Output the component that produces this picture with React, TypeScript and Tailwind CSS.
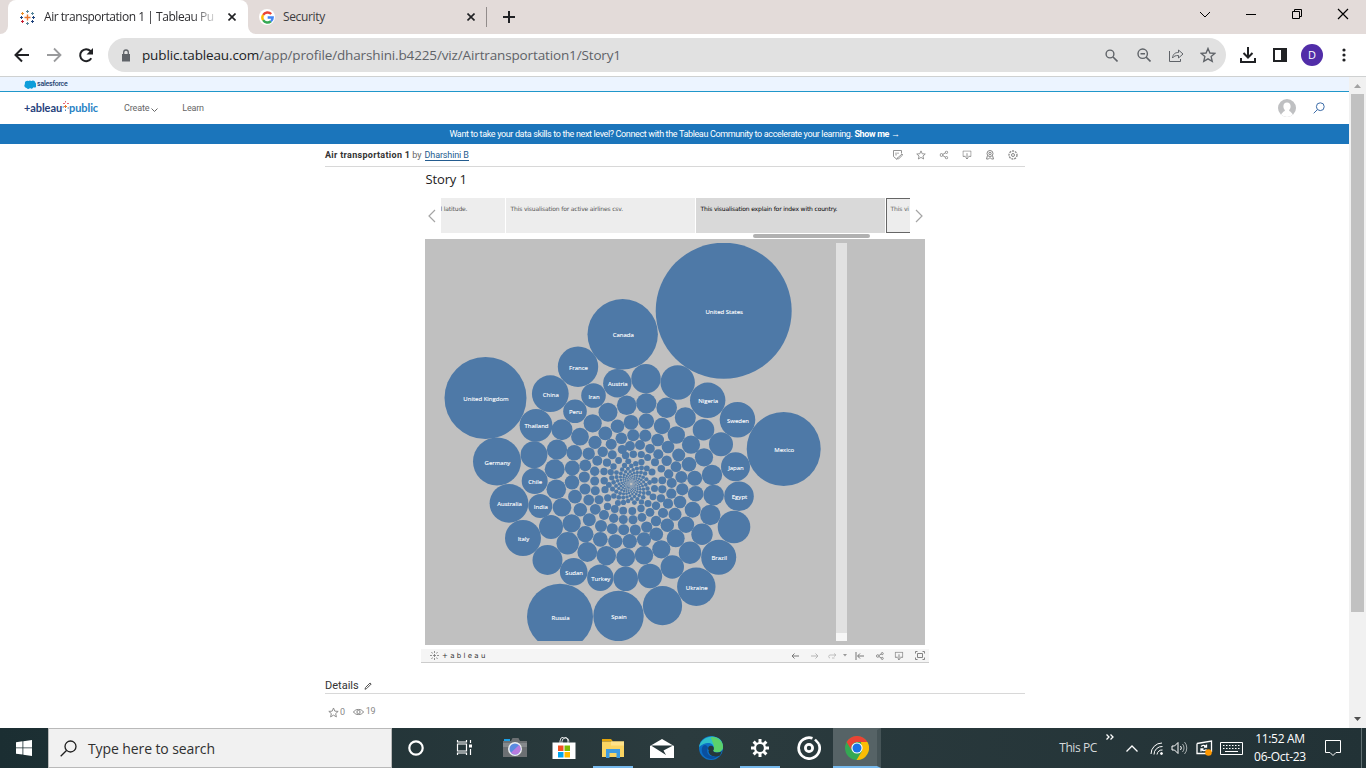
import React from "react";

type Circle = [number, number, number, string?];

const bubbles: Circle[] = [
  [723.7, 310.7, 68, "United States"], [622.7, 334.3, 35.2, "Canada"], [485.5, 398, 41, "United Kingdom"],
  [783.7, 449, 37, "Mexico"], [578, 366.7, 20.2, "France"], [550.3, 393.7, 18.4, "China"], [536, 425.3, 16.4, "Thailand"],
  [575, 411.3, 11.8, "Peru"], [593.5, 395.5, 12.3, "Iran"], [617.3, 383.3, 14.2, "Austria"], [707.7, 400.3, 17.7, "Nigeria"],
  [737.5, 419.7, 17.8, "Sweden"], [497, 461.5, 24, "Germany"], [509, 503.3, 19.4, "Australia"], [523, 538, 18, "Italy"],
  [573.7, 571.7, 13.8, "Sudan"], [600.3, 577.7, 13.2, "Turkey"], [560, 616.7, 33, "Russia"], [618.5, 616, 25.2, "Spain"],
  [534.7, 481, 13, "Chile"], [540.3, 506, 12, "India"], [735.5, 466.7, 14.5, "Japan"], [739, 496.3, 14.8, "Egypt"],
  [718.7, 557.3, 17.5, "Brazil"], [696.3, 586.7, 19.2, "Ukraine"],
  [662.5, 605.7, 19.6], [734, 527, 16.3], [547.5, 560, 15], [646, 378.7, 14.7], [677.7, 382.5, 17.2],
  [608, 412.3, 9.5], [626.7, 405.3, 9.8], [592.7, 423.3, 9.1], [562, 429.7, 10.5], [580, 436.7, 8.9], [605.3, 433.3, 6.9],
  [617.5, 426.3, 6.8], [631, 422.3, 7.4], [595, 442.3, 6.6], [611.2, 444.2, 5.5], [621.3, 438.3, 5.8], [633.2, 435.3, 6],
  [646.3, 403.3, 10.1], [666.7, 407.7, 10.3], [685.3, 417.7, 10.5], [703.5, 429.7, 10.8], [721, 444.3, 12],
  [646.3, 421.3, 7.8], [662, 426, 8.2], [676.3, 435, 8.7], [691, 444.7, 9.1], [645.3, 435.7, 6.1], [657.7, 440, 6.3],
  [668, 447, 6.3], [640, 445, 5], [650, 448.7, 4.8], [630, 446, 4.9], [622.3, 449.5, 4.6],
  [534, 454.7, 13.4], [557, 449.7, 10.1], [554.7, 469.3, 10], [556.3, 489.3, 9.8], [562, 507.3, 9.3], [551, 527, 12],
  [567.7, 543.3, 11.2], [587.3, 552, 9.9], [606.3, 555.7, 9.7], [625.7, 557.3, 9.4], [625.7, 578.7, 12.3],
  [574.3, 452.7, 7.8], [572.3, 468, 7.5], [572, 482.3, 7.2], [575, 496.7, 6.9], [580.3, 509.7, 6.8], [571.7, 523.3, 9.1],
  [585.3, 534.3, 8.2], [600.3, 539.3, 7.4], [615.3, 541.3, 7.1], [588.7, 453.7, 6.2], [585.3, 465.3, 5.9], [584.3, 477, 5.6],
  [585, 489, 5.5], [588.7, 500, 5.4], [595.3, 509.3, 5.4], [589.3, 519.7, 6.5], [601, 526, 6], [612.3, 528.7, 5.5],
  [623.7, 529.7, 5.5], [602.7, 451.7, 5.2], [597.3, 460.7, 5], [594.7, 471.2, 4.7], [594.7, 481, 4.5], [595.3, 490.7, 4.5],
  [599, 499.8, 4.5], [604, 515, 5], [613.7, 518.3, 4.7], [623.3, 519.5, 4.5], [612.3, 454.8, 4.5], [607, 462.7, 4.1],
  [650, 576, 12.2], [672.3, 567, 11.7], [690, 552.7, 11.2], [702, 534.3, 10.7], [710.3, 515, 10.2], [713.7, 495, 10.3],
  [712, 475, 10.2], [704, 457.3, 9.1], [689, 464.3, 7.3], [678.7, 455, 6.5], [694.7, 478.3, 7.5], [695.7, 493.7, 7.8],
  [692.7, 509.7, 8], [686, 524.7, 8.2], [675.7, 538.3, 9], [661.3, 549.3, 9.1], [644, 555.3, 9.2], [629.7, 541.3, 7.2],
  [644, 539.3, 7], [656.3, 534.3, 6.8], [667.3, 525.3, 6.7], [675, 514.3, 6.5], [680, 502, 6.3], [682.3, 489.3, 6.1],
  [681.3, 477, 6], [676, 466.7, 5.4], [666.7, 460.7, 5.2], [658.3, 454.3, 5], [668.7, 474, 4.7], [671.7, 483, 5],
  [671.3, 493.7, 5.1], [668, 503.7, 5.1], [663, 513, 5.1], [656, 521, 5.2], [646.7, 527, 5.6], [635.3, 530, 5.5],
  [633, 519.7, 4.5], [642, 517.3, 4.4], [650, 512.3, 4.4], [656, 505.7, 4.2], [661, 498.3, 4.1], [662.3, 489.3, 4.1],
  [662.3, 480.3, 3.9], [661.3, 468.7, 3.8], [655, 462.3, 4], [647.6, 457.5, 3.5],
  [604, 471.5, 3.7], [604.2, 480.7, 3.7], [605, 489.7, 3.6], [607.7, 497.8, 3.6], [607.5, 506.5, 3.7], [614.8, 509, 3.9],
  [623.2, 510.7, 3.9], [632.3, 511, 3.9], [641, 508.5, 3.7], [648, 503.5, 3.5], [653, 496.8, 3.4], [654.5, 488.5, 3.5],
  [654.5, 480.5, 3.3], [652, 472, 3.5], [625.6, 455.5, 3.7], [633.3, 454.3, 3.7], [641.3, 454.5, 3.6], [618.6, 460.5, 3.4], [613.5, 466.5, 3.2],
];

const core: Circle[] = [];
for (let k = 0; k < 270; k++) {
  const d = 27 * Math.exp(-0.0112 * k);
  const a = k * 2.399963;
  const x = 631.2 + Math.cos(a) * d;
  const y = 484 + Math.sin(a) * d;
  const r = d * 0.13;
  if (bubbles.every(([bx, by, br]) => Math.hypot(bx - x, by - y) > br + r - 1)) core.push([x, y, r]);
}

const I = ({ w, h = w, c = "", children, vb }: { w: number; h?: number; c?: string; vb?: string; children: React.ReactNode }) => (
  <svg width={w} height={h} viewBox={vb ?? `0 0 ${w} ${h}`} fill="none" stroke="currentColor" className={`block shrink-0 ${c}`}>
    {children}
  </svg>
);

const ShareIcon = ({ c = "" }: { c?: string }) => (
  <I w={10} c={c}>
    <circle cx="2.2" cy="5" r="1.6" /><circle cx="7.8" cy="2" r="1.3" /><circle cx="7.8" cy="8" r="1.3" />
    <path d="M3.7 4.3 6.6 2.6M3.7 5.7l2.9 1.7" />
  </I>
);
const DownloadIcon = ({ c = "" }: { c?: string }) => (
  <I w={10} c={c}><path d="M3.5 6.5h-3v-6h9v6h-3M5 3v6.3M3.4 7.8 5 9.4l1.6-1.6" /></I>
);
const Star = ({ w, c = "" }: { w: number; c?: string }) => (
  <I w={w} vb="0 0 20 20" c={c}><path strokeWidth="1.7" d="m10 1.8 2.4 5.7 6.1.5-4.6 4 1.4 6-5.3-3.2L4.700 18l1.400-6-4.600-4 6.100-.5z" /></I>
);

function Chrome() {
  return (
    <div className="font-['Open_Sans',sans-serif]">
      <div className="flex h-[34px] bg-[#e3dbd9]">
        <div className="h-full w-2 bg-white"><div className="h-full rounded-br-lg bg-[#e3dbd9]" /></div>
        <div className="flex h-full w-[240px] items-center rounded-t-lg bg-white pl-3">
          <I w={15}>
            <path stroke="#e8762c" strokeWidth="1.4" d="M7.500 4.500v6M4.500 7.500h6" />
            <path stroke="#59879b" d="M7.500 0v3M6 1.500h3M7.500 12v3M6 13.500h3M11 3.500h3M12.500 2v3" />
            <path stroke="#c72035" d="M1 11.500h3M2.500 10v3" /><path stroke="#eb912c" d="M1 3.500h3M2.500 2v3" />
            <path stroke="#1f447e" d="M11 11.500h3M12.500 10v3M13.500 6v3M12 7.500h3M0 7.500h3M1.500 6v3" />
          </I>
          <div className="ml-[9px] w-[176px] whitespace-nowrap text-[12px] tracking-[-0.46px] text-[#2c2c2f] [mask-image:linear-gradient(90deg,#000_84%,transparent)]">Air transportation 1 | Tableau Pu</div>
          <I w={8} c="ml-[8px] text-[#202124]"><path strokeWidth="1.600" d="m.5.5 7 7M7.500.5l-7 7" /></I>
        </div>
        <div className="h-full w-2 bg-white"><div className="h-full rounded-bl-lg bg-[#e3dbd9]" /></div>
        <div className="flex h-full items-center">
          <div className="ml-[3px] flex size-4 items-center justify-center rounded-full bg-white">
            <I w={13} vb="0 0 24 24">
              <g strokeWidth="4.500"><path stroke="#ea4335" d="M4 7a9.500 9.500 0 0 1 14.800-1.500" /><path stroke="#fbbc05" d="M4 7a9.500 9.500 0 0 0 0 10" /><path stroke="#34a853" d="M4 17a9.500 9.500 0 0 0 14.200 2" /><path stroke="#4285f4" d="M12.300 12h9.200c0 3-1.200 5.500-3.300 7" /></g>
            </I>
          </div>
          <div className="ml-2 w-[184px] text-[12px] tracking-[-0.35px] text-[#3c3c3f]">Security</div>
          <I w={8} c="text-[#202124]"><path strokeWidth="1.600" d="m.5.5 7 7M7.500.5l-7 7" /></I>
          <div className="ml-[11px] h-5 w-px bg-[#928c8b]" />
          <I w={12} c="ml-4 text-[#202124]"><path strokeWidth="2" d="M6 0v12M0 6h12" /></I>
        </div>
        <div className="ml-auto flex h-7 items-center gap-[34px] pr-[17px] text-black">
          <I w={12}><path d="m1 4 5 5 5-5" /></I>
          <I w={12}><path d="M1 6.500h10" /></I>
          <I w={12}><path d="M1.500 3.500h7v7h-7zM3.500 3.500v-2h7v7h-2" /></I>
          <I w={12}><path strokeWidth="1.200" d="m1 1 10 10M11 1 1 11" /></I>
        </div>
      </div>
      <div className="flex h-[42px] items-center bg-white">
        <I w={16} c="ml-[14px] text-[#202124]"><path strokeWidth="2" d="M15 8H2M8 1.500 1.500 8 8 14.500" /></I>
        <I w={16} c="ml-4 text-[#9a9b9d]"><path strokeWidth="1.800" d="M1 8h13M8 1.500 14.500 8 8 14.500" /></I>
        <I w={16} c="ml-4 text-[#202124]"><path strokeWidth="2" d="M13.300 11.300A6 6 0 1 1 12.500 4l1.500 1.700" /><path fill="currentColor" stroke="none" d="M15 1v6.500H8.500z" /></I>
        <div className="ml-[14px] flex h-[34px] w-[1118px] items-center rounded-full bg-[#e1e1e1] pl-[13px]">
          <I w={10} h={13} c="text-[#5f6368]"><path fill="currentColor" stroke="none" d="M1 5h8v7.500H1z" /><path strokeWidth="1.300" d="M2.700 5.500V3.300a2.300 2.300 0 0 1 4.600 0v2.200" /></I>
          <div className="ml-[11px] w-[964px] whitespace-nowrap text-[13.500px] tracking-[-0.14px] text-[#5f6368]"><span className="text-[#202124]">public.tableau.com</span>/app/profile/dharshini.b4225/viz/Airtransportation1/Story1</div>
          <I w={13} c="-ml-px text-[#5f6368]"><circle cx="5" cy="5" r="3.900" strokeWidth="1.400" /><path strokeWidth="1.600" d="m8 8 4.500 4.500" /></I>
          <I w={14} c="ml-[19px] text-[#5f6368]"><circle cx="5.700" cy="5.700" r="4.700" strokeWidth="1.400" /><path strokeWidth="1.600" d="m9 9 4.500 4.500M3.500 5.700h4.500" /></I>
          <I w={16} h={15} c="ml-[17px] text-[#5f6368]"><path d="M1.500 3v10.500h11V11" /><path d="M4.500 10c.5-4 2.500-5.500 6-5.500V2l4.500 4-4.500 4V7.500c-3 0-4.500.5-6 2.500z" /></I>
          <Star w={16} c="ml-4 text-[#5f6368]" />
        </div>
        <I w={16} c="ml-[14px] text-[#202124]"><path strokeWidth="2" d="M8 0v10M3.500 6 8 10.500 12.500 6M1 11v4h14v-4" /></I>
        <I w={14} c="ml-[17px] text-[#202124]"><path strokeWidth="2" d="M1 1h12v12H1z" /><path fill="currentColor" stroke="none" d="M8 1h5v12H8z" /></I>
        <div className="ml-[14px] flex size-[22px] items-center justify-center rounded-full bg-[#512da8] text-[11px] text-white">D</div>
        <I w={4} h={14} c="ml-[19px] text-[#202124]"><g fill="currentColor" stroke="none"><circle cx="2" cy="2" r="1.600" /><circle cx="2" cy="7" r="1.600" /><circle cx="2" cy="12" r="1.600" /></g></I>
      </div>
    </div>
  );
}

function SiteHeader() {
  return (
    <>
      <div className="flex h-[15px] shrink-0 items-center border-b border-[#2097ca] bg-[#ecf4ff] pl-6">
        <I w={12} h={9}><path fill="#0d9dda" stroke="none" d="M2.500 8A2.400 2.400 0 0 1 1 4 2.500 2.500 0 0 1 4.500 1 2.300 2.300 0 0 1 7.300.9 2.700 2.700 0 0 1 11.500 3a2.300 2.300 0 0 1-2 4.200A2.400 2.400 0 0 1 6 8a2.400 2.400 0 0 1-3.500 0z" /></I>
        <span className="ml-[1px] text-[7px] font-medium tracking-[-0.22px] text-[#19406f]">salesforce</span>
      </div>
      <div className="flex h-8 shrink-0 items-center bg-white">
        <div className="-mt-px ml-6 flex w-[74px] items-center whitespace-nowrap font-['Lato',sans-serif] text-[11px] font-bold leading-none tracking-[-0.08px]">
          <span className="text-[#26417c]">+ableau</span>
          <I w={7} h={11} c="mb-[5px]"><path stroke="#e4667a" d="M1 3.500h2M3.500 1v1.500M5 3.500h2" /><path stroke="#e8762c" d="M3.500 5v3M2 6.500h3" /><path stroke="#4a87bd" d="M.5 7h1.500M5.500 8h1.500M3.500 9.500V11" /></I>
          <span className="text-[#2682c4]">public</span>
        </div>
        <span className="ml-[26px] mt-[2px] text-[9px] tracking-[-0.15px] text-[#666]">Create</span>
        <I w={7} h={5} c="ml-[2px] mt-[4px] text-[#666]"><path d="m.5.5 3 3 3-3" /></I>
        <span className="ml-6 mt-[2px] text-[9px] tracking-[-0.2px] text-[#666]">Learn</span>
        <div className="ml-auto flex size-[18px] items-end justify-center overflow-hidden rounded-full bg-[#bfc0c2]">
          <I w={18}><path fill="#fff" stroke="none" d="M9 3.500c2.300 0 3.600 1.500 3.600 3.700 0 1.800-.6 3-1.600 3.900.3 1.900 3.500 1.600 4.500 6.900h-13c1-5.300 4.200-5 4.500-6.900-1-.9-1.600-2.100-1.600-3.900C5.400 5 6.700 3.500 9 3.500z" /></I>
        </div>
        <I w={12} c="ml-[17px] mr-[24px] text-[#3c6ca8]"><circle cx="7.300" cy="4.700" r="3.900" /><path d="M4.500 7.500.7 11.300" /></I>
      </div>
      <div className="flex h-5 shrink-0 items-center justify-center whitespace-pre bg-[#1b75bb] pt-px text-[9px] tracking-[-0.36px] text-white">Want to take your data skills to the next level? Connect with the Tableau Community to accelerate your learning. <b>Show me →</b></div>
    </>
  );
}

function Story() {
  const tiny = "h-[35px] shrink-0 overflow-hidden whitespace-nowrap font-['DejaVu_Sans',sans-serif] text-[6px] leading-[9px] tracking-[-0.15px]";
  return (
    <div className="mx-auto w-[500px] shrink-0">
      <div className="h-[31px] pl-px pt-[3px] font-['Open_Sans',sans-serif] text-[13px] leading-[18px] tracking-[-0.15px] text-[#222]">Story 1</div>
      <div className="flex h-[35px] items-center">
        <I w={16} h={14} c="text-[#a5a5a5]"><path strokeWidth="1.200" d="m10 1-6 6 6 6" /></I>
        <div className="flex w-[469px] gap-px overflow-hidden">
          <div className={`${tiny} w-16 bg-[#ededed] pt-[6px] text-[#555]`}>l latitude.</div>
          <div className={`${tiny} w-[189px] bg-[#ededed] pl-[5px] pt-[6px] text-[#555]`}>This visualisation for active airlines csv.</div>
          <div className={`${tiny} w-[189px] bg-[#d9d9d9] pl-[5px] pt-[6px] text-black`}>This visualisation explain for index with country.</div>
          <div className={`${tiny} w-6 border border-r-0 border-[#666] bg-[#ededed] pl-1 pt-[5px] text-[#666]`}>This vi</div>
        </div>
        <I w={15} h={14} c="text-[#a5a5a5]"><path strokeWidth="1.200" d="m6 1 6 6-6 6" /></I>
      </div>
      <div className="h-[6px] pl-[328px] pt-px"><div className="h-1 w-[117px] rounded-full bg-[#b1b1b1]" /></div>
      <svg className="block" width="500" height="406" viewBox="425 239 500 406">
        <rect x="425" y="239" width="500" height="406" fill="#c0c0c0" />
        <clipPath id="plot"><rect x="425" y="243" width="411" height="398" /></clipPath>
        <g clipPath="url(#plot)" fill="#4e79a7">
          {[...bubbles, ...core].map(([x, y, r], i) => <circle key={i} cx={x} cy={y} r={r} />)}
        </g>
        <g fill="#fff" fontSize="6" fontWeight="500" stroke="#fff" strokeWidth=".12" fontFamily="'Open Sans', sans-serif" textAnchor="middle">
          {bubbles.filter((b) => b[3]).map(([x, y, , t]) => <text key={t} x={x + 0.5} y={y + 3}>{t}</text>)}
        </g>
        <rect x="836" y="243" width="11" height="390" fill="#e1e1e1" />
        <rect x="836" y="633" width="11" height="8" fill="#f6f6f6" />
      </svg>
    </div>
  );
}

function VizToolbar() {
  return (
    <div className="ml-[421px] mt-1 flex h-[14px] w-[508px] shrink-0 items-center border-b border-[#ccc] bg-[#f5f5f5] text-[#777]">
      <I w={9} c="ml-[9px]"><path strokeWidth=".8" d="M4.500 0v2M4.500 7v2M0 4.500h2M7 4.500h2M4.500 3v3M3 4.500h3M1.500 1l1 1.500M7.500 1l-1 1.500M1.500 8l1-1.500M7.500 8l-1-1.500" /></I>
      <span className="ml-[3px] mt-px font-['DejaVu_Sans',sans-serif] text-[7px] leading-none tracking-[2.3px] text-[#333]">+ableau</span>
      <I w={8} h={6} c="ml-auto"><path d="M8 3H1M3.500.5 1 3l2.500 2.500" /></I>
      <I w={8} h={6} c="ml-3 text-[#b5b5b5]"><path d="M0 3h7M4.500.5 7 3 4.500 5.500" /></I>
      <I w={10} h={6} c="ml-2 text-[#c0c0c0]"><path d="M3 5H2.500a2 2 0 0 1 0-3H9M7 .5 9 2 7 3.500M5 5h2.500" /></I>
      <I w={4} h={3} c="ml-[6px] text-[#999]"><path fill="currentColor" stroke="none" d="M0 0h4L2 2.500z" /></I>
      <I w={9} h={8} c="ml-2"><path d="M1 0v8M9 4H3M5 1.500 2.500 4 5 6.500" /></I>
      <ShareIcon c="ml-[11px] scale-[.8]" />
      <DownloadIcon c="ml-[9px] scale-[.85]" />
      <I w={10} h={9} c="ml-[11px] mr-[4px]"><path strokeWidth=".9" d="M.5 2.500v-2h2M7.500.5h2v2M9.500 6.500v2h-2M2.500 8.500h-2v-2M2.500 2.500h5v4h-5z" /></I>
    </div>
  );
}

function Page() {
  return (
    <div className="flex h-[651px] bg-white font-['Roboto',sans-serif]">
      <div className="flex w-[1349px] flex-col overflow-hidden">
        <SiteHeader />
        <div className="ml-[325px] flex h-[23px] w-[700px] shrink-0 items-center border-b border-[#d8d8d8] text-[9px] text-[#666]">
          <b className="mt-px tracking-[0.31px] text-[#333]">Air transportation 1</b>
          <span className="ml-[2px] mt-px">by</span>
          <span className="ml-[3px] mt-px border-b border-[#245c8f] leading-[10px] tracking-[-0.14px] text-[#245c8f]">Dharshini B</span>
          <div className="ml-auto mr-[7px] flex items-center gap-[13px] text-[#888]">
            <I w={10}><path strokeWidth=".9" d="M8.500 3.500v-3h-8v6L4 9.500l.5-2M3 2.500v3M5 2.500V4M4.500 8l4.500-4 .8.8L5.500 9z" /></I>
            <Star w={10} />
            <ShareIcon c="scale-90" />
            <DownloadIcon c="scale-90" />
            <I w={10}><circle cx="5" cy="3.500" r="3" /><circle cx="5" cy="3.500" r="1.200" /><path d="M2.500 5.500 1.500 9h2L5 7.500 6.500 9h2l-1-3.500" /></I>
            <I w={10}><circle cx="5" cy="5" r="4" strokeWidth="1.300" strokeDasharray="2 .9" /><circle cx="5" cy="5" r="1.500" /></I>
          </div>
        </div>
        <Story />
        <VizToolbar />
        <div className="ml-[325px] mt-[15px] flex h-4 w-[700px] shrink-0 items-center border-b border-[#d8d8d8] text-[11px] text-[#333]">
          <span className="mt-px">Details</span>
          <I w={8} c="ml-[5px] text-[#555]"><path d="M1 7.300 1.500 5.500 6 1l1.200 1L2.700 6.500z" /></I>
        </div>
        <div className="ml-[328px] mt-[11px] flex h-[14px] shrink-0 items-center text-[9px] tracking-[-0.3px] text-[#888]">
          <Star w={11} /><span className="ml-px mt-px">0</span>
          <I w={11} h={8} c="ml-2"><path d="M.5 4C2.500.6 8.500.6 10.500 4 8.500 7.400 2.500 7.400.5 4z" /><circle cx="5.500" cy="4" r="1.600" /></I>
          <span className="ml-[2px]">19</span>
        </div>
        <div className="ml-[325px] mt-[7px] shrink-0 text-[8px] leading-[9px] text-[#777]">Air transportation 1</div>
      </div>
      <div className="flex w-[17px] flex-col items-center justify-between bg-[#f1f1f1]">
        <I w={7} h={17}><path fill="#a3a3a3" stroke="none" d="M0 11h7L3.500 7z" /></I>
        <div className="mb-auto h-[518px] w-[13px] bg-[#c1c1c1]" />
        <I w={7} h={17}><path fill="#505050" stroke="none" d="M0 6h7L3.500 10z" /></I>
      </div>
    </div>
  );
}

const Task = ({ children, c = "" }: { children: React.ReactNode; c?: string }) => (
  <div className={`flex h-10 shrink-0 items-center justify-center border-y-2 border-transparent ${c || "w-[49px]"}`}>{children}</div>
);

function Taskbar() {
  return (
    <div className="flex h-10 items-center bg-gradient-to-r from-[#1b2e32] via-[#2b3b3e] to-[#223236] font-['Open_Sans',sans-serif] text-white">
      <div className="flex w-12 justify-center">
        <I w={16}><path fill="#fff" stroke="none" d="M0 2.200 6.500 1.300v6.200H0zM7.300 1.200 16 0v7.500H7.300zM0 8.300h6.500v6.200L0 13.700zM7.300 8.300H16V16l-8.700-1.200z" /></I>
      </div>
      <div className="flex h-10 w-[344px] items-center border border-[#b9b9b9] bg-[#f1f1f1] pl-[11px] text-[14px] text-[#303030]">
        <I w={17} c="text-[#1f1f1f]"><circle cx="10.500" cy="6.500" r="5.500" strokeWidth="1.300" /><path strokeWidth="1.300" d="M6.500 10.500.7 16.300" /></I>
        <span className="ml-[11px] tracking-[-0.1px]">Type here to search</span>
      </div>
      <Task c="w-12"><I w={16}><circle cx="8" cy="8" r="6.700" strokeWidth="2.200" /></I></Task>
      <Task c="w-[49px] pr-px">
        <I w={17} h={16}><path strokeWidth="1.200" d="M1.500 4h9v7h-9zM1.500 0v2h9V0M1.500 15v-2h9v2M14.500 0v3M14.500 9v6" /><path fill="#fff" stroke="none" d="M13 4.500h3v3h-3z" /></I>
      </Task>
      <Task c="ml-px w-[49px]">
        <svg width="24" height="20" viewBox="0 0 24 20"><path fill="#1aa0e8" d="M1 1h6v3H1z" /><path fill="#6c7073" d="M8 3l1.500-3h6L17 3h7v16H0V3z" /><path fill="#85898c" d="M0 5h24v4H0z" /><circle cx="12" cy="11" r="7" fill="#eceff1" /><circle cx="12" cy="11" r="5.500" fill="#5b8be0" /><path d="M8 14.800 16 7a5.500 5.500 0 0 1-8 7.800z" fill="#b77be0" /></svg>
      </Task>
      <Task>
        <svg width="24" height="23" viewBox="0 0 24 23"><path d="M8 7V4a4 4 0 0 1 8 0v3M10 7V4.500a3.500 3.500 0 0 1 7 0" fill="none" stroke="#d8dcdd" /><path fill="#fff" d="M.5 5.500h23V22H.500z" /><path fill="#f25022" d="M6 8.500h5.500V14H6z" /><path fill="#7fba00" d="M12.500 8.500H18V14h-5.500z" /><path fill="#00a4ef" d="M6 15h5.500v5.500H6z" /><path fill="#ffb900" d="M12.500 15H18v5.500h-5.500z" /></svg>
      </Task>
      <Task c="ml-[5px] mr-[4px] w-10 border-b-[#76b9ed]">
        <svg width="22" height="19" viewBox="0 0 22 19"><path fill="#e5a50a" d="M0 0h9l2 2.500H0z" /><path fill="#fbd562" d="M0 2.500h22V18H0z" /><path fill="#ffe28a" d="M9 2.500h13v4H9z" /><path fill="#3e9be0" d="M4 10h14v9h-3.500v-5h-7v5H4z" /></svg>
      </Task>
      <Task>
        <svg width="24" height="19" viewBox="0 0 24 19"><path fill="#fff" d="M0 7 12 0l12 7v12H0z" /><path fill="#26373a" d="M1 6.500h22l-9.500 5L16 16z" /></svg>
      </Task>
      <Task>
        <svg width="24" height="24" viewBox="0 0 24 24">
          <circle cx="12" cy="12" r="12" fill="#0d6fc4" /><path d="M0 11C2-2 24-4 24 11c0 4-4 6-8 5-2-.5-2.500-1.500-1.500-3 1.500-6-7-9-14.500-2z" fill="#2fbfc9" /><path d="M12 1c8 0 12 5 12 10 0 4-4 6-8 5-2-.5-2-1.500-1.300-3C16 8 12 5 12 1z" fill="#5bd16b" /><path d="M9 12c-3 5 2 11 11 7-6 8-19 3-17-7 1-4 5-4 6 0z" fill="#0a4f9e" /><path d="M14.500 13c-1 2 0 3.500 4 3.500 2.500 0 4-1 4.500-2l-2 5c-4 2-11 1-11.500-4.500z" fill="#26373a" /><circle cx="12" cy="12.500" r="2.800" fill="#26373a" />
        </svg>
      </Task>
      <Task c="ml-[5px] mr-1 w-10 border-b-[#76b9ed]">
        <I w={18}><circle cx="9" cy="9" r="5" strokeWidth="2.200" /><path strokeWidth="3" d="M9 0v4M9 14v4M0 9h4M14 9h4M2.600 2.600l2.900 2.900M12.500 12.500l2.900 2.900M15.400 2.600l-2.900 2.900M5.500 12.500l-2.900 2.900" /></I>
      </Task>
      <Task>
        <I w={24}><path strokeWidth="2.700" d="M15.500 2.200A10.500 10.500 0 1 0 21.800 8" /><circle cx="12" cy="12" r="3.600" strokeWidth="2.800" /><path strokeWidth="2.500" d="M18 3.500 22 8" /></I>
      </Task>
      <div className="flex h-10 w-12 shrink-0 items-center justify-center border-b-2 border-r-4 border-t-2 border-b-[#76b9ed] border-r-[#465457] border-t-[#566366] bg-[#566366] pl-1">
        <svg width="24" height="24" viewBox="0 0 24 24"><circle cx="12" cy="12" r="12" fill="#34a853" /><path fill="#fbbc05" d="M22.400 6A12 12 0 0 1 11.500 24L17 15l-1-9z" /><path fill="#ea4335" d="M1.600 6A12 12 0 0 1 22.400 6H12a6 6 0 0 0-5 9z" /><circle cx="12" cy="12" r="5.600" fill="#fff" /><circle cx="12" cy="12" r="4.500" fill="#1a73e8" /></svg>
      </div>
      <div className="ml-auto flex h-10 items-center">
        <span className="text-[12px] tracking-[-0.4px] text-[#d5dadb]">This PC</span>
        <I w={8} h={6} c="mb-[22px] ml-[9px]"><path strokeWidth="1.300" d="m.5.500 2.500 2.500L.500 5.500M4.500.500 7 3 4.500 5.500" /></I>
        <I w={12} h={7} c="ml-[12px]"><path strokeWidth="1.300" d="m.5 6.500 5.500-5.500 5.500 5.500" /></I>
        <I w={13} c="ml-[12px]"><path d="M1 12A11 11 0 0 1 12 1M4 12.500A8 8 0 0 1 12.500 4.500M7 12.500A5 5 0 0 1 12.500 8" /><circle cx="11.500" cy="11.500" r="1" fill="currentColor" /></I>
        <I w={17} h={14} c="ml-2"><path d="M1 5h2.500L7 1.500v11L3.500 9H1z" /><path d="M9.500 5a3 3 0 0 1 0 4" /><path opacity=".6" d="M11.500 3a6 6 0 0 1 0 8M13.500 1a9 9 0 0 1 0 12" /></I>
        <I w={17} h={16} c="ml-2"><path strokeWidth="1.300" d="M1 3.500 15.500 1v11M1 3.500v10h9M5 6.500c2-1.500 4-1.500 5 .5M10.500 4.500V7H8M10.500 9.500c-2 1.500-4 1.500-5-.500M5 11.500V9h2.500" /><circle cx="12.500" cy="12.500" r="3.300" fill="#ff9800" stroke="none" /></I>
        <I w={23} h={13} c="ml-[7px]"><path d="M.5.500h22v12H.500zM5 9.500h13" /><path strokeDasharray="1.500 1.500" d="M3 3.500h17M3 6.500h17" /></I>
        <div className="ml-[9px] w-[56px] whitespace-nowrap text-center text-[12px] leading-[18px] tracking-[-0.3px]">11:52 AM<br />06-Oct-23</div>
        <I w={17} h={16} c="ml-[17px] -mt-px"><path d="M.5.500h15v12h-4.500L8 15.500 5 12.500H.500z" /></I>
        <div className="ml-[19px] mr-1 h-10 w-px bg-[#617073]" />
      </div>
    </div>
  );
}

export default function App() {
  return (
    <div className="h-[768px] w-[1366px] overflow-hidden bg-white">
      <Chrome />
      <div className="h-px bg-[#cfd1d1]" />
      <Page />
      <Taskbar />
    </div>
  );
}
